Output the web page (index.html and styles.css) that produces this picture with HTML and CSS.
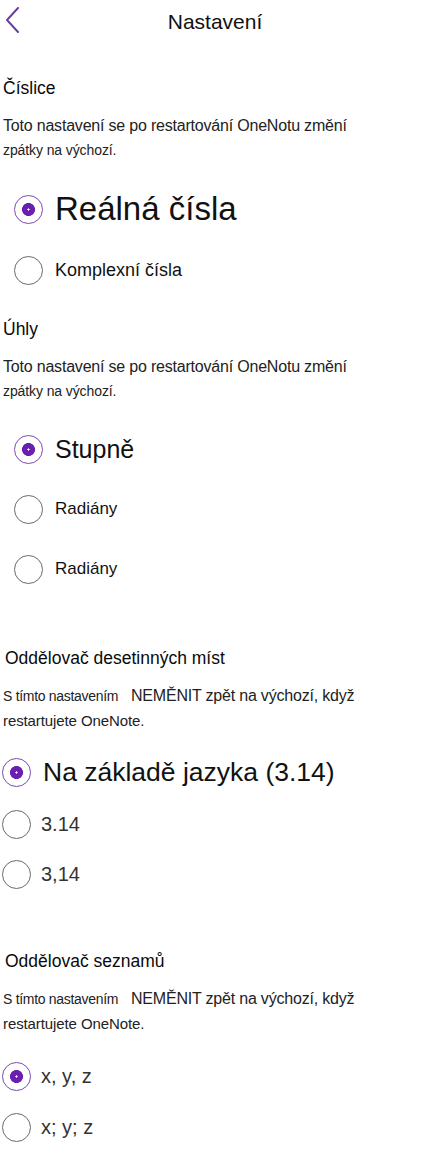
FILE: index.html
```html
<!DOCTYPE html>
<html>
<head>
    <meta charset="utf-8">
    <title>Nastavení</title>
    <link rel="stylesheet" href="styles.css">
</head>
<body>
    <div class="header">
        <a class="back" href="#">
            <svg width="16" height="26" viewBox="0 0 16 26"><path d="M13 1 L2 13 L13 25" fill="none" stroke="#6b3fa0" stroke-width="2" stroke-linecap="round" stroke-linejoin="round"/></svg>
        </a>
        <div class="title">Nastavení</div>
    </div>

    <div class="section">
        <div class="heading h-numbers">Číslice</div>
        <div class="desc">
            <div class="line1">Toto nastavení se po restartování OneNotu změní</div>
            <div class="line2">zpátky na výchozí.</div>
        </div>
        <label class="option indent m-real"><input type="radio" name="num" checked><span class="t33">Reálná čísla</span></label>
        <label class="option indent m-complex"><input type="radio" name="num"><span class="t18">Komplexní čísla</span></label>
    </div>

    <div class="section">
        <div class="heading h-angles">Úhly</div>
        <div class="desc">
            <div class="line1">Toto nastavení se po restartování OneNotu změní</div>
            <div class="line2">zpátky na výchozí.</div>
        </div>
        <label class="option indent m-deg"><input type="radio" name="ang" checked><span class="t25">Stupně</span></label>
        <label class="option indent m-rad1"><input type="radio" name="ang"><span class="t17">Radiány</span></label>
        <label class="option indent m-rad2"><input type="radio" name="ang"><span class="t17">Radiány</span></label>
    </div>

    <div class="section">
        <div class="heading wide h-decimal">Oddělovač desetinných míst</div>
        <div class="desc">
            <div class="line1"><span class="small">S tímto nastavením</span>&nbsp;&nbsp; NEMĚNIT zpět na výchozí, když</div>
            <div class="line2 mid">restartujete OneNote.</div>
        </div>
        <label class="option m-lang"><input type="radio" name="dec" checked><span class="t26">Na základě jazyka (3.14)</span></label>
        <label class="option m-dot"><input type="radio" name="dec"><span class="t20">3.14</span></label>
        <label class="option m-comma"><input type="radio" name="dec"><span class="t20">3,14</span></label>
    </div>

    <div class="section">
        <div class="heading wide h-list">Oddělovač seznamů</div>
        <div class="desc">
            <div class="line1"><span class="small">S tímto nastavením</span>&nbsp;&nbsp; NEMĚNIT zpět na výchozí, když</div>
            <div class="line2 mid">restartujete OneNote.</div>
        </div>
        <label class="option m-xyz1"><input type="radio" name="list" checked><span class="t20">x, y, z</span></label>
        <label class="option m-xyz2"><input type="radio" name="list"><span class="t20">x; y; z</span></label>
    </div>
</body>
</html>
```

FILE: styles.css
```css
body {
    margin: 0;
    background-color: #fff;
    color: #111;
    font-family: "Liberation Sans", Arial, sans-serif;
    width: 430px;
}

.header {
    height: 44px;
    display: flex;
    align-items: center;
    justify-content: center;
    position: relative;
}

.back {
    position: absolute;
    left: 5px;
    top: 7px;
    display: block;
}

.title {
    font-size: 21px;
    color: #111;
}

.section {
    padding-left: 3px;
}

.heading {
    height: 24px;
    line-height: 24px;
    font-size: 17.5px;
    color: #0a0a0a;
}

.heading.wide {
    padding-left: 2px;
}

.h-numbers { margin-top: 32px; }
.h-angles { margin-top: 25px; }
.h-decimal { margin-top: 55px; }
.h-list { margin-top: 53px; }

.desc {
    margin-top: 13px;
    color: #222;
}

.line1 {
    height: 25px;
    line-height: 25px;
    font-size: 16px;
    letter-spacing: -0.2px;
}

.line2 {
    height: 25px;
    line-height: 25px;
    font-size: 14px;
    letter-spacing: -0.1px;
}

.line2.mid {
    font-size: 15px;
}

.small {
    font-size: 14px;
    letter-spacing: -0.3px;
}

.option {
    height: 44px;
    display: flex;
    align-items: center;
    gap: 10px;
    cursor: pointer;
}

.option.indent {
    padding-left: 11px;
    gap: 12px;
}

.option input {
    appearance: none;
    -webkit-appearance: none;
    margin: 0;
    width: 29px;
    height: 29px;
    flex: none;
    border-radius: 50%;
    border: 1.3px solid #6a6a6a;
    background: #fff;
}

.option input:checked {
    border-color: #7d4bb0;
    background: radial-gradient(circle, #fff 0 0.8px, #6a1fb0 1.4px 6.2px, #fff 6.8px);
}

.t33 { font-size: 33px; }
.t26 { font-size: 26.5px; }
.t25 { font-size: 25px; }
.t20 { font-size: 20px; color: #333; }
.t18 { font-size: 18px; }
.t17 { font-size: 17px; }

.m-real { margin-top: 24px; }
.m-complex { margin-top: 17px; }
.m-deg { margin-top: 23px; }
.m-rad1 { margin-top: 16px; }
.m-rad2 { margin-top: 16px; }
.m-lang { margin-top: 17px; margin-left: -1px; gap: 12px; }
.m-dot { margin-top: 8px; margin-left: -1px; }
.m-comma { margin-top: 6px; margin-left: -1px; }
.m-xyz1 { margin-top: 18px; margin-left: -1px; }
.m-xyz2 { margin-top: 7px; margin-left: -1px; }
```
